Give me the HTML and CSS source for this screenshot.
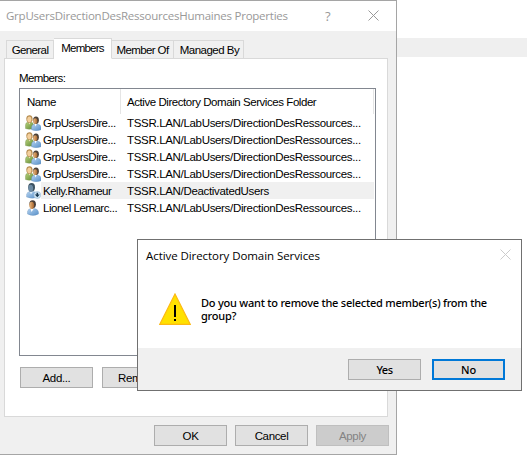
FILE: index.html
```html
<!DOCTYPE html>
<html lang="en">
<head>
<meta charset="utf-8">
<title>Group properties</title>
<link rel="stylesheet" href="styles.css">
</head>
<body>
<svg class="defs" aria-hidden="true">
  <defs>
    <linearGradient id="blue" x1="0" y1="0" x2="1" y2="1"><stop offset="0" stop-color="#b5d2ef"/><stop offset="1" stop-color="#5790c9"/></linearGradient>
    <linearGradient id="green" x1="0" y1="0" x2="1" y2="1"><stop offset="0" stop-color="#b9d17c"/><stop offset="1" stop-color="#5f8b35"/></linearGradient>
    <linearGradient id="skin" x1="0" y1="0" x2="1" y2="0"><stop offset="0" stop-color="#f0bd83"/><stop offset="1" stop-color="#a5652e"/></linearGradient>
    <symbol id="group" viewBox="0 0 16 16">
      <path d="M.5 13.500V10Q.5 7.500 3 7H6Q8.500 7.500 8.500 10V13.500Q4 15 .5 13.500Z" fill="url(#green)" stroke="#799653" stroke-width=".4"/>
      <path d="M3 6.500L4.500 9.500L6 6.500Z" fill="#f3dfbd"/>
      <path d="M1.300 3.500Q1.600 0 5 .2Q8 .8 7.600 5.500L6 7.800H3Q1.100 6 1.300 3.500Z" fill="#b58b4e"/>
      <ellipse cx="4.300" cy="4.300" rx="2.100" ry="2.900" fill="#f3cf9c"/>
      <path d="M6.500 14.800V12Q6.700 9.500 9.500 9H12.500Q15.700 9.500 16 12V14.800Q11 16.500 6.500 14.800Z" fill="url(#blue)" stroke="#5c88b5" stroke-width=".3"/>
      <path d="M9.500 8.500L10.500 11.500L12 8.500Z" fill="#fff"/>
      <ellipse cx="11" cy="5.300" rx="2.900" ry="3.700" fill="#4b4037"/>
      <ellipse cx="10.300" cy="6.100" rx="2.100" ry="2.900" fill="url(#skin)"/>
    </symbol>
    <symbol id="user" viewBox="0 0 16 16">
      <path d="M2.500 14V11.500Q3 9 5.500 8.500H9.500Q13 9 13.500 12V14Q8 17 2.500 14Z" fill="url(#blue)" stroke="#5c88b5" stroke-width=".3"/>
      <path d="M5.500 8.500L6.500 12L9 8.500Z" fill="#fff"/>
      <ellipse cx="7.600" cy="4.300" rx="3.300" ry="4.100" fill="#493e38"/>
      <ellipse cx="6.700" cy="5.300" rx="2.400" ry="3.600" fill="url(#skin)"/>
    </symbol>
    <symbol id="disabled" viewBox="0 0 16 16">
      <path d="M1.500 14V11.500Q2 9 4.500 8.500H8.500Q12.500 9 13 12V14Q7 16.500 1.500 14Z" fill="url(#blue)" stroke="#789ebf" stroke-width=".3"/>
      <path d="M4.500 8.500L6 11.500L8 8.500Z" fill="#dcecf8"/>
      <ellipse cx="6.600" cy="4.300" rx="3.400" ry="4.200" fill="#3d5261"/>
      <ellipse cx="5.700" cy="5.300" rx="2.400" ry="3.600" fill="#6c8aa3"/>
      <circle cx="12.300" cy="12" r="3.500" fill="#cee4f5" stroke="#86abc9" stroke-width=".5"/>
      <path d="M11.500 9.800H13.100V11.600H14.800L12.300 14.300L9.800 11.600H11.500Z" fill="#15364f"/>
    </symbol>
  </defs>
</svg>

<main class="desktop">
  <div class="band"></div>
  <section class="window props">
    <header class="titlebar">
      <span class="title">GrpUsersDirectionDesRessourcesHumaines Properties</span>
      <span class="help">?</span>
      <svg class="close" viewBox="0 0 11 11"><path d="M.5.5L10.500 10.500M10.500.5L.5 10.500"/></svg>
    </header>
    <nav class="tabs">
      <span class="tab general">General</span>
      <span class="tab members active">Members</span>
      <span class="tab memberof">Member Of</span>
      <span class="tab managed">Managed By</span>
    </nav>
    <div class="panel">
      <div class="label">Members:</div>
      <div class="list">
        <div class="head"><span class="col-name">Name</span><span class="col-folder">Active Directory Domain Services Folder</span></div>
        <div class="row"><svg class="icon"><use href="#group"/></svg><span class="name">GrpUsersDire...</span><span class="folder">TSSR.LAN/LabUsers/DirectionDesRessources...</span></div>
        <div class="row"><svg class="icon"><use href="#group"/></svg><span class="name">GrpUsersDire...</span><span class="folder">TSSR.LAN/LabUsers/DirectionDesRessources...</span></div>
        <div class="row"><svg class="icon"><use href="#group"/></svg><span class="name">GrpUsersDire...</span><span class="folder">TSSR.LAN/LabUsers/DirectionDesRessources...</span></div>
        <div class="row"><svg class="icon"><use href="#group"/></svg><span class="name">GrpUsersDire...</span><span class="folder">TSSR.LAN/LabUsers/DirectionDesRessources...</span></div>
        <div class="row selected"><svg class="icon"><use href="#disabled"/></svg><span class="name">Kelly.Rhameur</span><span class="folder">TSSR.LAN/DeactivatedUsers</span></div>
        <div class="row"><svg class="icon"><use href="#user"/></svg><span class="name">Lionel Lemarc...</span><span class="folder">TSSR.LAN/LabUsers/DirectionDesRessources...</span></div>
      </div>
      <div class="actions"><button class="btn">Add...</button><button class="btn remove">Rem</button></div>
    </div>
    <footer class="bottom"><button class="btn">OK</button><button class="btn">Cancel</button><button class="btn off" disabled>Apply</button></footer>
  </section>

  <section class="window dialog">
    <header class="dialog-title"><span class="dialog-name">Active Directory Domain Services</span>
      <svg class="close" viewBox="0 0 11 11"><path d="M.5.5L10.500 10.500M10.500.5L.5 10.500"/></svg>
    </header>
    <div class="message">
      <svg class="warning" viewBox="0 0 32 32"><path d="M16 1L31.300 31.400H.7Z" fill="#ffe100" stroke="#fdb913" stroke-width="1.200"/><path d="M15 12H17V24H15ZM15 26H17V28H15Z" fill="#000"/></svg>
      <p class="question">Do you want to remove the selected member(s) from the<br>group?</p>
    </div>
    <footer class="choices"><button class="btn ui">Yes</button><button class="btn ui default">No</button></footer>
  </section>
</main>
</body>
</html>
```
FILE: styles.css
```css
* { box-sizing: border-box; }
body { margin: 0; background: #fff; color: #000; font: 11.5px/17px "Liberation Sans", Arial, sans-serif; }
.defs { position: absolute; width: 0; height: 0; }
.desktop { position: relative; width: 527px; height: 455px; overflow: hidden; padding-top: 38px; white-space: nowrap; }
.band { height: 19px; margin-left: 397px; background: #efefef; }
.window { position: absolute; display: flex; flex-direction: column; }
.props { left: -1px; top: 0; width: 398px; height: 455px; border: 1px solid #a5a5a5; background: #f0f0f0; }
.titlebar { height: 30px; background: #fff; display: flex; align-items: center; padding-left: 6px; color: #999; font: 11.5px/16px "Open Sans", sans-serif; }
.title { width: 319px; letter-spacing: -.24px; }
.help { width: 43px; font-size: 13px; margin-top: -1px; }
.close { width: 11px; height: 11px; margin-top: -2px; fill: none; stroke: currentColor; stroke-width: 1; }
.tabs { display: flex; align-items: flex-end; height: 28px; padding-left: 6px; margin-bottom: -1px; position: relative; z-index: 1; }
.tab { height: 19px; border: 1px solid #d9d9d9; border-left: 0; background: #f0f0f0; text-align: center; line-height: 19px; letter-spacing: -.6px; }
.general { width: 48px; border-left: 1px solid #d9d9d9; }
.members { width: 58px; letter-spacing: -.75px; }
.memberof { width: 62px; }
.managed { width: 70px; padding-left: 2px; letter-spacing: -.5px; }
.active { height: 21px; background: #fff; border-bottom-color: #fff; }
.panel { width: 384px; height: 359px; margin-left: 4px; border: 1px solid #d9d9d9; background: #fff; padding: 10px 11px 0 14px; }
.label { height: 19px; line-height: 18px; letter-spacing: -.6px; }
.list { width: 357px; height: 268px; border: 1px solid #828790; }
.head { display: flex; width: 354px; height: 25px; line-height: 26px; border-right: 1px solid #e5e5e5; letter-spacing: -.44px; }
.col-name { width: 101px; padding-left: 7px; border-right: 1px solid #e5e5e5; }
.col-folder { padding-left: 6px; }
.row { display: flex; height: 17px; line-height: 19px; }
.icon { width: 16px; height: 16px; margin: 1px 0 0 5px; flex: none; }
.name { width: 81px; padding-left: 2px; letter-spacing: -.48px; }
.folder { width: 252px; padding-left: 5px; letter-spacing: -.33px; }
.selected .name, .selected .folder { background: #f0f0f0; }
.actions { display: flex; gap: 9px; padding: 11px 0 0 1px; }
.btn { width: 73px; height: 21px; padding: 0; border: 1px solid #adadad; background: #e1e1e1; color: #000; font: inherit; line-height: 20px; text-align: center; letter-spacing: -.35px; }
.remove { text-align: left; padding-left: 15px; }
.off { background: #ccc; border-color: #bfbfbf; color: #838383; }
.bottom { display: flex; gap: 8px; padding: 8px 0 0 154px; }
.dialog { left: 137px; top: 239px; width: 385px; height: 152px; border: 1px solid #707070; background: #fff; font-family: "Open Sans", sans-serif; }
.dialog-title { display: flex; justify-content: space-between; height: 30px; padding: 0 10px 0 8px; align-items: center; font-size: 11.5px; letter-spacing: -.07px; }
.dialog-title .close { color: #ccc; }
.message { display: flex; height: 78px; padding: 23px 0 0 21px; gap: 10px; }
.warning { width: 32px; height: 32px; flex: none; }
.question { margin: 3px 0 0; font: 500 11px/13px "Noto Sans", sans-serif; letter-spacing: -.23px; }
.choices { flex: 1; background: #f0f0f0; display: flex; justify-content: flex-end; gap: 11px; padding: 11px 16px 0 0; }
.ui { font: 500 11px/19px "Noto Sans", sans-serif; letter-spacing: -.5px; }
.default { border: 2px solid #0078d7; line-height: 17px; letter-spacing: -.2px; }
```
